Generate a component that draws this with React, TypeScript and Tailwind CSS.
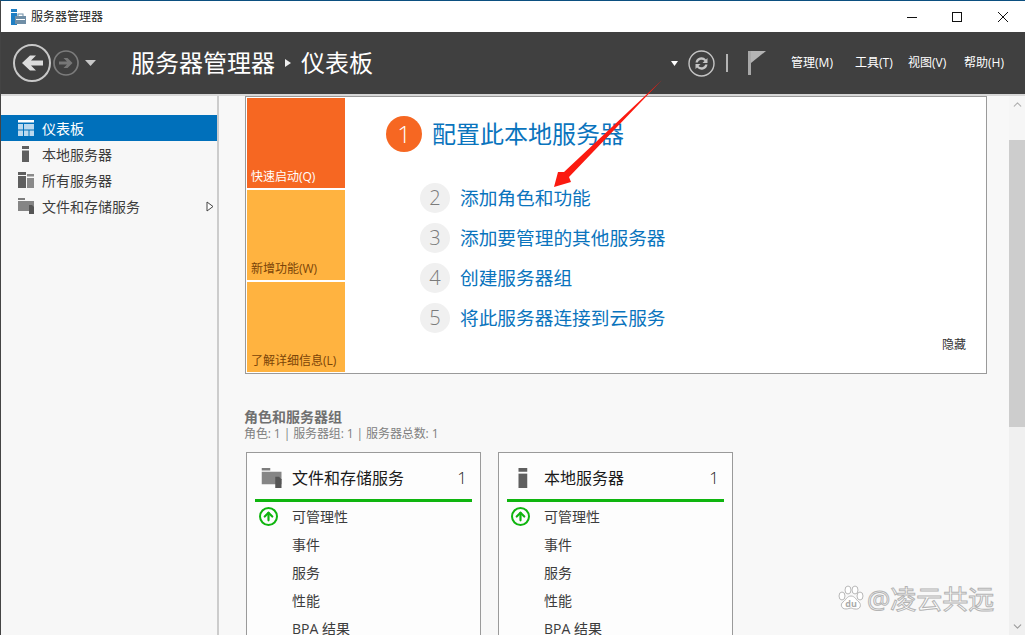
import { ChevronUp, ChevronDown, ArrowUp } from 'lucide-react';

const font = { fontFamily: '"Open Sans", "Noto Sans CJK SC", sans-serif' };

function TileIcon({ kind }: { kind: string }) {
  if (kind === 'dash') {
    return (
      <svg width="20" height="16" viewBox="0 0 20 16">
        <rect x="0" y="0" width="16" height="2.5" fill="#fff" />
        <rect x="0" y="4" width="5" height="5.5" fill="#bcd9ee" />
        <rect x="6" y="4" width="10" height="5.5" fill="#bcd9ee" />
        <rect x="0" y="10.5" width="5" height="5.5" fill="#bcd9ee" />
        <rect x="6" y="10.5" width="4.5" height="5.5" fill="#bcd9ee" />
        <rect x="11.5" y="10.5" width="4.5" height="5.5" fill="#bcd9ee" />
      </svg>
    );
  }
  if (kind === 'server') {
    return (
      <svg width="20" height="16" viewBox="0 0 20 16">
        <rect x="4" y="0" width="7" height="3" fill="#5f5f5f" />
        <rect x="4" y="4.5" width="7" height="11.5" fill="#5f5f5f" />
      </svg>
    );
  }
  if (kind === 'all') {
    return (
      <svg width="20" height="16" viewBox="0 0 20 16">
        <rect x="0" y="0" width="8" height="3" fill="#5f5f5f" />
        <rect x="0" y="4" width="8" height="12" fill="#5f5f5f" />
        <rect x="9" y="2" width="7" height="2.5" fill="#8a8a8a" />
        <rect x="9" y="6" width="7" height="10" fill="#8a8a8a" />
      </svg>
    );
  }
  return (
    <svg width="20" height="16" viewBox="0 0 20 16">
      <path d="M0 0h7v2H0z" fill="#7d7d7d" />
      <path d="M0 3h16v10H0z" fill="#858585" />
      <path d="M11 7h3l2 2v7h-5z" fill="#555555" />
    </svg>
  );
}

function NavItem({ label, kind, active, more }: { label: string; kind: string; active?: boolean; more?: boolean }) {
  return (
    <div className={`flex h-[26px] items-center pl-[17px] text-[14px] ${active ? 'bg-[#0070bb] text-white' : 'text-[#3c3c3c]'}`}>
      <TileIcon kind={kind} />
      <span className="ml-[4px] flex-1">{label}</span>
      {more && (
        <svg className="mr-[3px]" width="8" height="11" viewBox="0 0 8 11">
          <path d="M1 1l6 4.5L1 10z" fill="#fff" stroke="#444" />
        </svg>
      )}
    </div>
  );
}

function Tile({ label, hot }: { label: string; hot?: boolean }) {
  return (
    <div className={`flex h-[90px] items-end pb-[3px] pl-[4px] text-[12px] leading-[16px] ${hot ? 'bg-[#f66722] text-white' : 'bg-[#ffb340] text-[#7a4408]'}`}>
      {label}
    </div>
  );
}

function Step({ n, label }: { n: number; label: string }) {
  return (
    <div className="flex h-[40px] items-center">
      <div className="flex h-[30px] w-[30px] items-center justify-center rounded-full bg-[#f0f0f0] text-[20px] font-light text-[#7b7b7b]">{n}</div>
      <span className="ml-[10px] text-[18.7px] text-[#0a74bd]">{label}</span>
    </div>
  );
}

function RoleCard({ title, kind, mr }: { title: string; kind: string; mr?: boolean }) {
  return (
    <div className={`h-[200px] w-[235px] shrink-0 border border-[#9a9a9a] bg-[#fdfdfd] px-[8px] ${mr ? 'mr-[17px]' : ''}`}>
      <div className="flex h-[49px] items-center border-b-[3px] border-[#0fb50f] pt-[3px]">
        <div className="flex w-[37px] justify-center">
          <div className="origin-center scale-[1.25]"><TileIcon kind={kind} /></div>
        </div>
        <span className="flex-1 text-[16px] text-[#1a1a1a]">{title}</span>
        <span className="mr-[5px] text-[17px] font-light text-[#1a1a1a]">1</span>
      </div>
      <div className="flex h-[28px] items-center text-[14px] text-[#3c3c3c]">
        <div className="flex w-[37px] justify-start pl-[4px]">
          <div className="flex h-[19px] w-[19px] items-center justify-center rounded-full border-2 border-[#0fb50f]">
            <ArrowUp size={13} strokeWidth={4} color="#0fb50f" />
          </div>
        </div>
        可管理性
      </div>
      {['事件', '服务', '性能', 'BPA 结果'].map((t) => (
        <div key={t} className="flex h-[28px] items-center pl-[37px] text-[14px] text-[#3c3c3c]">{t}</div>
      ))}
    </div>
  );
}

export default function App() {
  return (
    <div style={font} className="relative flex h-[635px] w-[1025px] flex-col overflow-hidden border-t border-l border-t-[#0b4f80] border-l-[#444444] bg-white">
      <div className="flex h-[31px] shrink-0 items-center">
        <svg className="ml-[10px]" width="15" height="16" viewBox="0 0 15 16">
          <rect x="0" y="0" width="6" height="3" fill="#1f7fc4" />
          <rect x="0" y="4" width="6" height="12" fill="#1f7fc4" />
          <rect x="4" y="7" width="11" height="8" fill="#6f8ea6" />
          <rect x="7" y="5" width="5" height="2.5" fill="none" stroke="#6f8ea6" />
          <rect x="5" y="10" width="9" height="1" fill="#fff" />
        </svg>
        <span className="ml-[5px] flex-1 text-[12px] text-[#222]">服务器管理器</span>
        <svg className="mr-[16px]" width="102" height="12" viewBox="0 0 102 12">
          <path d="M0 6.5h10" stroke="#111" />
          <rect x="45.500" y="1.5" width="9" height="9" fill="none" stroke="#111" />
          <path d="M91 1l10 10M101 1L91 11" stroke="#111" />
        </svg>
      </div>

      <div className="flex h-[62px] shrink-0 items-center bg-[#404040]">
        <svg className="ml-[12px]" width="72" height="40" viewBox="0 0 72 40">
          <circle cx="19" cy="20" r="18" fill="none" stroke="#c8c8c8" strokeWidth="2" />
          <path d="M30 17.500H18l5-5h-6l-8 7.500 8 7.500h6l-5-5h12z" fill="#dcdcdc" />
          <circle cx="53" cy="20" r="12" fill="none" stroke="#7c7c7c" strokeWidth="1.7" />
          <path d="M46 18.500h8l-3.500-3.500h4l5 5-5 5h-4l3.500-3.500h-8z" fill="#777" />
        </svg>
        <svg width="11" height="6" viewBox="0 0 11 6"><path d="M0 0h11L5.500 6z" fill="#c8c8c8" /></svg>
        <div className="ml-[35px] flex flex-1 items-center text-[24px] text-white">
          <span>服务器管理器</span>
          <svg className="mx-[10px]" width="6" height="8" viewBox="0 0 6 8"><path d="M0 0l6 4-6 4z" fill="#eee" /></svg>
          <span>仪表板</span>
        </div>
        <svg width="8" height="5" viewBox="0 0 8 5"><path d="M0 0h7L3.500 5z" fill="#fff" /></svg>
        <svg className="ml-[9px]" width="27" height="27" viewBox="0 0 27 27">
          <circle cx="13.5" cy="13.5" r="12.5" fill="none" stroke="#c4c4c4" strokeWidth="1.4" />
          <path d="M7.500 12.500a6 6 0 0 1 10.500-3l1.500-1.500v5h-5l2-2a4 4 0 0 0-6.800 1.500z" fill="#c4c4c4" />
          <path d="M19.500 14.500a6 6 0 0 1-10.500 3l-1.500 1.500v-5h5l-2 2a4 4 0 0 0 6.800-1.500z" fill="#c4c4c4" />
        </svg>
        <div className="ml-[11px] h-[18px] w-[2px] bg-[#b4b4b4]" />
        <svg className="ml-[20px]" width="18" height="24" viewBox="0 0 18 24">
          <rect x="0" y="0" width="3" height="24" fill="#a8a8a8" />
          <path d="M3 0h15l-15 12z" fill="#b4b4b4" />
        </svg>
        <div className="ml-[25px] flex items-center text-[12px] text-white">
          <span className="w-[64px]">管理(M)</span>
          <span className="w-[53px]">工具(T)</span>
          <span className="w-[56px]">视图(V)</span>
          <span className="mr-[21px]">帮助(H)</span>
        </div>
      </div>

      <div className="flex min-h-0 flex-1 border-t-2 border-[#d8d8d8]">
        <div className="w-[218px] shrink-0 border-r-2 border-[#cccccc] bg-[#f7f7f7] pt-[19px]">
          <NavItem label="仪表板" kind="dash" active />
          <NavItem label="本地服务器" kind="server" />
          <NavItem label="所有服务器" kind="all" />
          <NavItem label="文件和存储服务" kind="files" more />
        </div>

        <div className="min-w-0 flex-1 overflow-hidden bg-[#f8f8f8] pl-[26px]">
          <div className="flex h-[278px] w-[742px] border border-[#9a9a9a] bg-white p-[1px]">
            <div className="flex w-[98px] shrink-0 flex-col gap-[2px]">
              <Tile label="快速启动(Q)" hot />
              <Tile label="新增功能(W)" />
              <Tile label="了解详细信息(L)" />
            </div>
            <div className="relative flex-1 pl-[41px] pt-[18px]">
              <div className="flex h-[36px] items-center">
                <div className="flex h-[36px] w-[36px] items-center justify-center rounded-full bg-[#f66722] text-[24px] font-light text-white">1</div>
                <span className="ml-[10px] text-[24px] text-[#0a74bd]">配置此本地服务器</span>
              </div>
              <div className="ml-[34px] mt-[26px]">
                <Step n={2} label="添加角色和功能" />
                <Step n={3} label="添加要管理的其他服务器" />
                <Step n={4} label="创建服务器组" />
                <Step n={5} label="将此服务器连接到云服务" />
              </div>
              <span className="absolute bottom-[18px] right-[19px] text-[12px] text-[#333]">隐藏</span>
            </div>
          </div>

          <div className="-ml-[1px] mt-[33px] text-[14px] font-bold leading-[20px] text-[#707070]">角色和服务器组</div>
          <div className="-ml-[1px] text-[12px] leading-[14px] tracking-[-0.1px] text-[#808080]">角色: 1 | 服务器组: 1 | 服务器总数: 1</div>
          <div className="ml-[1px] mt-[11px] flex">
            <RoleCard title="文件和存储服务" kind="files" mr />
            <RoleCard title="本地服务器" kind="server" />
          </div>
        </div>

        <div className="flex w-[16px] shrink-0 flex-col items-center bg-[#f0f0f0]">
          <div className="flex h-[44px] w-full items-start justify-center bg-[#f6f6f6] pt-[2px]"><ChevronUp size={13} color="#b0b0b0" /></div>
          <div className="h-[287px] w-full bg-[#cdcdcd]" />
          <div className="flex w-full flex-1 items-end justify-center pb-[2px]"><ChevronDown size={13} color="#9a9a9a" /></div>
        </div>
      </div>

      {/* annotation arrow, page coords minus the 1px window border */}
      <svg className="absolute left-[549px] top-[77px]" width="115" height="112" viewBox="0 0 115 112">
        <path d="M112 2L19 99l2 5L4 109l4-15 6 0z" fill="#fb1a10" />
      </svg>

      <div className="absolute left-[837px] top-[583px] flex items-center">
        <svg width="26" height="28" viewBox="0 0 26 28">
          <g fill="#fff" stroke="#b8b8b8" strokeWidth="1">
            <ellipse cx="4" cy="11" rx="3" ry="4" />
            <ellipse cx="10" cy="5" rx="3" ry="4" />
            <ellipse cx="17" cy="5" rx="3" ry="4" />
            <ellipse cx="22" cy="11" rx="3" ry="4" />
            <path d="M13 11c4 0 5 4 8 6 3 3 1 8-4 7-2 0-3-1-4-1s-3 1-5 1c-5 0-6-5-3-7 3-2 4-6 8-6z" />
          </g>
          <text x="13" y="22" textAnchor="middle" fontSize="9" fontWeight="700" fill="#aaa" fontFamily="Open Sans, sans-serif">du</text>
        </svg>
        <span className="ml-[3px] text-[26px] leading-[30px] text-white [-webkit-text-stroke:1px_#b4b4b4]">@凌云共远</span>
      </div>
    </div>
  );
}
